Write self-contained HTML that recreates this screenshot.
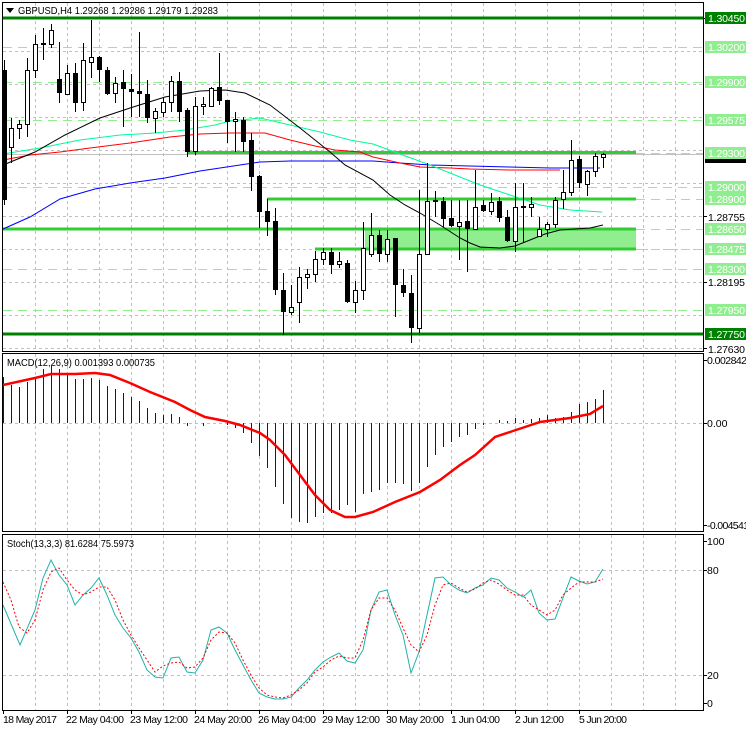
<!DOCTYPE html>
<html><head><meta charset="utf-8"><style>
html,body{margin:0;padding:0;background:#fff}
svg{display:block}
text{font-family:"Liberation Sans","DejaVu Sans",sans-serif;font-size:10.5px}
</style></head><body>
<svg width="746" height="731" viewBox="0 0 746 731" xmlns="http://www.w3.org/2000/svg">
<rect width="746" height="731" fill="#fff"/>
<g stroke="#c0c0c0" stroke-dasharray="3,3" stroke-width="1">
<path d="M35.5 3V351M67.5 3V351M99.5 3V351M131.5 3V351M163.5 3V351M195.5 3V351M227.5 3V351M259.5 3V351M291.5 3V351M323.5 3V351M355.5 3V351M387.5 3V351M419.5 3V351M451.5 3V351M483.5 3V351M515.5 3V351M547.5 3V351M579.5 3V351M611.5 3V351M643.5 3V351M675.5 3V351"/>
<path d="M35.5 354V532M67.5 354V532M99.5 354V532M131.5 354V532M163.5 354V532M195.5 354V532M227.5 354V532M259.5 354V532M291.5 354V532M323.5 354V532M355.5 354V532M387.5 354V532M419.5 354V532M451.5 354V532M483.5 354V532M515.5 354V532M547.5 354V532M579.5 354V532M611.5 354V532M643.5 354V532M675.5 354V532"/>
<path d="M35.5 535V710M67.5 535V710M99.5 535V710M131.5 535V710M163.5 535V710M195.5 535V710M227.5 535V710M259.5 535V710M291.5 535V710M323.5 535V710M355.5 535V710M387.5 535V710M419.5 535V710M451.5 535V710M483.5 535V710M515.5 535V710M547.5 535V710M579.5 535V710M611.5 535V710M643.5 535V710M675.5 535V710"/>
<path d="M3 348.5H703M3 315.5H703M3 282.5H703M3 249.5H703M3 216.5H703M3 183.5H703M3 150.5H703M3 117.5H703M3 84.5H703M3 51.5H703M3 423.5H703M3 570.5H703M3 675.5H703"/>
</g>
<g stroke="#90ee90" stroke-dasharray="9,6" stroke-width="1">
<path d="M3 47.5H703M3 82.5H703M3 120.5H703M3 187.5H703M3 269.5H703M3 310.5H703M636 153.5H703M636 199.5H703M636 229.5H703M636 249.5H703"/>
</g>
<rect x="365" y="229" width="271" height="20" fill="#90ee90"/>
<path d="M3 154.5H703" stroke="#c0c0c0" stroke-width="1"/>
<path d="M3 18H703" stroke="#008000" stroke-width="3"/>
<path d="M3 334H703" stroke="#008000" stroke-width="3"/>
<g stroke="#32cd32" stroke-width="3">
<path d="M187 152.5H636M267 199H636M3 229H636M315 249H636"/>
</g>
<g fill="none" stroke-width="1">
<polyline stroke="#0000ff" points="3,229 30,217 60,199 95,189 130,183 165,178 200,171 240,165 260,162 290,161 330,161 373,161 400,163 430,165 470,166 510,167 550,168 600,168"/>
<polyline stroke="#ff0000" points="3,160 30,155 60,152 90,148 130,143 170,137 200,134 230,133 265,133 290,140 315,146 335,150 360,152 373,157 400,163 420,167 450,168 470,169 510,170 540,170 560,170"/>
<polyline stroke="#00fa9a" points="3,154 40,148 80,140 120,135 155,133 185,130 215,125 230,121 260,118 290,125 320,132 350,140 373,144 400,154 430,165 460,177 480,185 510,195 540,205 570,210 602,212"/>
<polyline stroke="#000" points="3,165 35,152 65,135 100,118 130,108 165,97 200,91 225,90 245,93 270,105 300,128 330,152 345,165 373,180 390,195 405,205 420,213 440,225 460,238 470,243 480,247 500,248 515,246 530,240 545,234 560,230 590,228 603,225"/>
</g>
<path stroke="#000" stroke-width="1" fill="none" d="M4.5 60V205M11.5 118V163M19.5 120V139M27.5 58V137M35.5 35V78M43.5 28V60M51.5 24V48M59.5 42V103M67.5 65V95M75.5 63V112M83.5 43V111M91.5 20V78M99.5 56V82M107.5 67V95M115.5 77V103M123.5 70V127M131.5 74V117M139.5 32V117M147.5 80V123M155.5 108V133M163.5 98V117M171.5 76V112M179.5 72V122M187.5 108V157M195.5 97V155M203.5 97V115M211.5 87V107M219.5 53V105M227.5 100V143M235.5 112V152M243.5 117V152M251.5 133V191M259.5 175V228M267.5 199V236M275.5 208V295M283.5 273V335M291.5 285V315M299.5 267V323M307.5 269V289M315.5 251V282M323.5 248V265M331.5 248V274M339.5 252V268M347.5 260V303M355.5 281V313M363.5 222V300M371.5 213V257M379.5 230V262M387.5 230V262M395.5 238V317M403.5 269V297M411.5 275V343M419.5 190V333M427.5 163V255M435.5 191V217M443.5 197V227M451.5 200V227M459.5 200V260M467.5 200V272M475.5 170V230M483.5 200V212M491.5 193V215M499.5 197V222M507.5 210V242M515.5 183V252M523.5 183V243M531.5 197V217M539.5 217V237M547.5 222V237M555.5 197V228M563.5 170V209M571.5 140V196M579.5 156V188M587.5 170V196M595.5 153V177M603.5 153V168"/>
<g fill="#000">
<rect x="2" y="70" width="5" height="130"/><rect x="57" y="79" width="5" height="14"/><rect x="73" y="73" width="5" height="30"/><rect x="97" y="57" width="5" height="13"/><rect x="105" y="70" width="5" height="24"/><rect x="121" y="82" width="5" height="7"/><rect x="129" y="89" width="5" height="3"/><rect x="137" y="91" width="5" height="3"/><rect x="145" y="94" width="5" height="24"/><rect x="177" y="81" width="5" height="31"/><rect x="185" y="110" width="5" height="42"/><rect x="217" y="87" width="5" height="14"/><rect x="225" y="100" width="5" height="22"/><rect x="241" y="120" width="5" height="22"/><rect x="249" y="140" width="5" height="37"/><rect x="257" y="176" width="5" height="36"/><rect x="265" y="211" width="5" height="11"/><rect x="273" y="221" width="5" height="69"/><rect x="281" y="290" width="5" height="22"/><rect x="329" y="252" width="5" height="13"/><rect x="345" y="263" width="5" height="39"/><rect x="377" y="235" width="5" height="19"/><rect x="393" y="238" width="5" height="47"/><rect x="401" y="285" width="5" height="8"/><rect x="409" y="293" width="5" height="35"/><rect x="441" y="201" width="5" height="18"/><rect x="449" y="218" width="5" height="8"/><rect x="465" y="221" width="5" height="8"/><rect x="481" y="205" width="5" height="6"/><rect x="497" y="201" width="5" height="17"/><rect x="505" y="217" width="5" height="24"/><rect x="577" y="159" width="5" height="24"/>
</g>
<g fill="#fff" stroke="#000" stroke-width="1">
<rect x="9.5" y="128.5" width="4" height="19"/><rect x="17.5" y="124.5" width="4" height="4"/><rect x="25.5" y="70.5" width="4" height="54"/><rect x="33.5" y="44.5" width="4" height="26"/><rect x="41.5" y="43.5" width="4" height="1"/><rect x="49.5" y="30.5" width="4" height="14"/><rect x="65.5" y="73.5" width="4" height="21"/><rect x="81.5" y="60.5" width="4" height="42"/><rect x="89.5" y="57.5" width="4" height="5"/><rect x="113.5" y="83.5" width="4" height="10"/><rect x="153.5" y="111.5" width="4" height="7"/><rect x="161.5" y="102.5" width="4" height="10"/><rect x="169.5" y="81.5" width="4" height="21"/><rect x="193.5" y="106.5" width="4" height="45"/><rect x="201.5" y="104.5" width="4" height="2"/><rect x="209.5" y="88.5" width="4" height="18"/><rect x="233.5" y="119.5" width="4" height="2"/><rect x="289.5" y="307.5" width="4" height="5"/><rect x="297.5" y="277.5" width="4" height="25"/><rect x="305.5" y="274.5" width="4" height="3"/><rect x="313.5" y="259.5" width="4" height="15"/><rect x="321.5" y="252.5" width="4" height="7"/><rect x="337.5" y="261.5" width="4" height="3"/><rect x="353.5" y="290.5" width="4" height="12"/><rect x="361.5" y="248.5" width="4" height="42"/><rect x="369.5" y="235.5" width="4" height="19"/><rect x="385.5" y="239.5" width="4" height="15"/><rect x="417.5" y="254.5" width="4" height="74"/><rect x="425.5" y="201.5" width="4" height="53"/><rect x="433.5" y="200.5" width="4" height="1"/><rect x="457.5" y="222.5" width="4" height="4"/><rect x="473.5" y="207.5" width="4" height="22"/><rect x="489.5" y="202.5" width="4" height="9"/><rect x="513.5" y="207.5" width="4" height="34"/><rect x="521.5" y="206.5" width="4" height="1"/><rect x="529.5" y="204.5" width="4" height="3"/><rect x="537.5" y="229.5" width="4" height="7"/><rect x="545.5" y="224.5" width="4" height="5"/><rect x="553.5" y="200.5" width="4" height="24"/><rect x="561.5" y="192.5" width="4" height="7"/><rect x="569.5" y="160.5" width="4" height="32"/><rect x="585.5" y="171.5" width="4" height="13"/><rect x="593.5" y="156.5" width="4" height="15"/><rect x="601.5" y="154.5" width="4" height="3"/>
</g>
<path stroke="#0000ff" stroke-width="1" d="M3.5 423V377M11.5 423V385M19.5 423V387M27.5 423V382M35.5 423V378M43.5 423V369M51.5 423V366M59.5 423V369M67.5 423V373M75.5 423V379M83.5 423V379M91.5 423V378M99.5 423V380M107.5 423V386M115.5 423V389M123.5 423V393M131.5 423V397M139.5 423V401M147.5 423V408M155.5 423V413M163.5 423V415M171.5 423V414M179.5 423V417M187.5 423V426M203.5 423V426M227.5 423V425M235.5 423V428M243.5 423V433M251.5 423V443M259.5 423V456M267.5 423V468M275.5 423V487M283.5 423V504M291.5 423V518M299.5 423V522M307.5 423V523M315.5 423V517M323.5 423V513M331.5 423V513M339.5 423V510M347.5 423V505M355.5 423V512M363.5 423V494M371.5 423V492M379.5 423V490M387.5 423V483M395.5 423V483M403.5 423V484M411.5 423V491M419.5 423V483M427.5 423V467M435.5 423V455M443.5 423V447M451.5 423V442M459.5 423V437M467.5 423V435M475.5 423V429M483.5 423V425M499.5 423V420M507.5 423V421M515.5 423V418M523.5 423V420M531.5 423V419M539.5 423V418M547.5 423V415M555.5 423V418M563.5 423V417M571.5 423V412M579.5 423V404M587.5 423V402M595.5 423V399M603.5 423V390"/>
<polyline fill="none" stroke="#ff0000" stroke-width="2.5" points="3,385 35,378 51,374 75,374 95,373 110,375 130,383 150,392 175,402 190,410 205,417 225,421 240,425 260,433 270,440 285,455 300,475 315,495 330,510 345,517 355,517 373,512 395,502 420,492 440,480 460,465 475,455 495,437 510,432 525,427 540,422 555,420 570,418 590,414 603,406"/>
<polyline fill="none" stroke="#20b2aa" stroke-width="1" points="3,605 20,645 35,610 43,578 51,560 59,575 67,585 75,605 83,595 91,588 99,578 107,595 115,615 123,628 131,638 139,652 147,670 155,677 163,678 171,658 179,657 187,672 195,673 203,660 211,630 219,627 227,633 235,650 243,665 251,680 259,693 267,697 275,699 283,699 291,697 299,688 307,680 315,670 323,662 331,657 339,653 347,661 355,663 363,650 371,610 379,592 387,590 395,615 403,635 411,673 419,652 427,615 435,578 443,577 451,585 459,590 467,593 475,588 483,585 491,578 499,580 507,588 515,592 523,597 531,590 539,613 547,620 555,619 563,598 571,577 579,581 587,584 595,582 603,569"/>
<polyline fill="none" stroke="#ff0000" stroke-width="1" stroke-dasharray="2,2" points="3,582 11,600 19,627 27,633 35,620 43,590 51,572 59,568 67,580 75,590 83,595 91,592 99,587 107,587 115,600 123,620 131,635 139,648 147,660 155,672 163,666 171,663 179,662 187,668 195,667 203,658 211,640 219,632 227,633 235,643 243,660 251,675 259,688 267,695 275,697 283,698 291,695 299,690 307,683 315,672 323,667 331,660 339,656 347,658 355,658 363,640 371,610 379,598 387,598 395,610 403,628 411,645 419,652 427,635 435,605 443,585 451,583 459,588 467,592 475,589 483,583 491,580 499,584 507,590 515,595 523,595 531,605 539,610 547,615 555,610 563,595 571,588 579,582 587,582 595,582 603,579"/>
<g fill="none" stroke="#000" stroke-width="1">
<rect x="2.5" y="2.5" width="701" height="349"/>
<rect x="2.5" y="353.5" width="701" height="178"/>
<rect x="2.5" y="534.5" width="701" height="176"/>
</g>
<path stroke="#000" d="M703 18.5h4M703 216.5h4M703 282.5h4M703 348.5h4M703 360.5h4M703 423.5h4M703 525.5h4M703 541.5h4M703 570.5h4M703 675.5h4M703 703.5h4M3.5 710v4M67.5 710v4M131.5 710v4M195.5 710v4M259.5 710v4M323.5 710v4M387.5 710v4M451.5 710v4M515.5 710v4M579.5 710v4"/>
<path d="M6 8h8l-4 5z" fill="#000"/>
<text x="18" y="14" fill="#000" textLength="200" lengthAdjust="spacingAndGlyphs">GBPUSD,H4  1.29268 1.29286 1.29179 1.29283</text>
<text x="7" y="366" fill="#000" textLength="148" lengthAdjust="spacingAndGlyphs">MACD(12,26,9) 0.001393 0.000735</text>
<text x="7" y="547" fill="#000" textLength="127" lengthAdjust="spacingAndGlyphs">Stoch(13,3,3) 81.6284 75.5973</text>
<rect x="705" y="12" width="41" height="12" fill="#008000"/>
<g fill="#90ee90">
<rect x="705" y="41" width="41" height="12"/><rect x="705" y="76" width="41" height="12"/><rect x="705" y="114" width="41" height="12"/><rect x="705" y="147" width="41" height="12"/><rect x="705" y="181" width="41" height="12"/><rect x="705" y="193" width="41" height="12"/><rect x="705" y="223" width="41" height="12"/><rect x="705" y="243" width="41" height="12"/><rect x="705" y="263" width="41" height="12"/><rect x="705" y="304" width="41" height="12"/>
</g>
<rect x="705" y="328" width="41" height="12" fill="#008000"/>
<rect x="705" y="159" width="41" height="4" fill="#000"/>
<g fill="#fff" lengthAdjust="spacingAndGlyphs">
<text x="708" y="22" textLength="37">1.30450</text><text x="708" y="51" textLength="37">1.30200</text><text x="708" y="86" textLength="37">1.29900</text><text x="708" y="124" textLength="37">1.29575</text><text x="708" y="157" textLength="37">1.29300</text><text x="708" y="191" textLength="37">1.29000</text><text x="708" y="203" textLength="37">1.28900</text><text x="708" y="233" textLength="37">1.28650</text><text x="708" y="253" textLength="37">1.28475</text><text x="708" y="273" textLength="37">1.28300</text><text x="708" y="314" textLength="37">1.27950</text><text x="708" y="338" textLength="37">1.27750</text>
</g>
<g fill="#000">
<text x="708" y="221" textLength="37">1.28755</text><text x="708" y="286" textLength="37">1.28195</text><text x="708" y="353" textLength="37">1.27630</text>
<text x="707" y="364" textLength="40">0.002842</text><text x="707" y="427">0.00</text><text x="707" y="529" textLength="42">-0.004541</text>
<text x="707" y="545">100</text><text x="707" y="574">80</text><text x="707" y="679">20</text><text x="707" y="707">0</text>
<text x="3" y="723" textLength="54">18 May 2017</text><text x="66" y="723" textLength="58">22 May 04:00</text><text x="130" y="723" textLength="58">23 May 12:00</text><text x="194" y="723" textLength="58">24 May 20:00</text><text x="258" y="723" textLength="58">26 May 04:00</text><text x="322" y="723" textLength="58">29 May 12:00</text><text x="386" y="723" textLength="58">30 May 20:00</text><text x="451" y="723" textLength="49">1 Jun 04:00</text><text x="515" y="723" textLength="49">2 Jun 12:00</text><text x="579" y="723" textLength="48">5 Jun 20:00</text>
</g>
</svg>
</body></html>
